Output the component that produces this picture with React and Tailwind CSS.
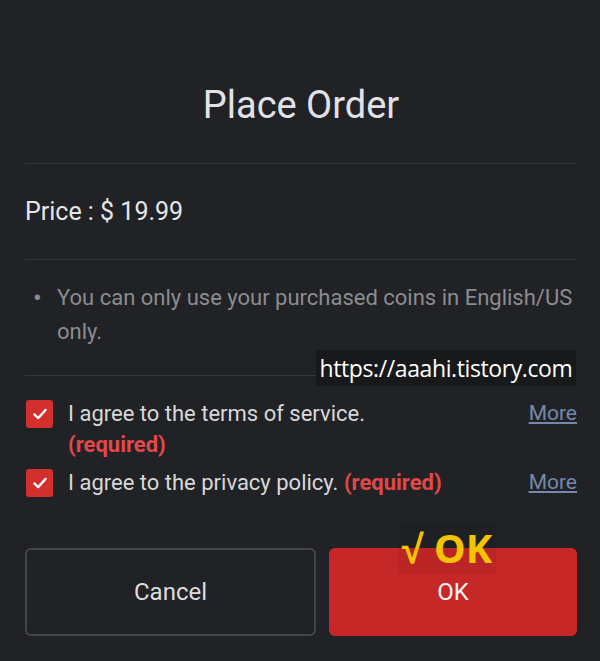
import React from "react";

const Check = () => (
  <svg viewBox="0 0 24 24" className="w-[18px] h-[18px]" fill="none">
    <path
      d="M4.5 12.5l5 5 10-11"
      stroke="#ffffff"
      strokeWidth="3"
      strokeLinecap="round"
      strokeLinejoin="round"
    />
  </svg>
);

const Box = () => (
  <div className="w-[27px] h-[28px] shrink-0 rounded-[3px] bg-[#d32f2f] flex items-center justify-center mt-[2px] ml-[1px]">
    <Check />
  </div>
);

export default function App() {
  return (
    <div className="relative w-[600px] h-[661px] bg-[#212225] font-['Roboto',sans-serif] pl-[25px] pr-[23px] overflow-hidden">
      <h1 className="pt-[83px] text-center text-[38px] leading-[44px] text-[#e2e2e6] font-normal">
        Place Order
      </h1>
      <div className="mt-[36px] h-px bg-[#38393c]" />
      <div className="pt-[33px] pb-[32px] text-[25px] leading-[30px] text-[#e6e6e8]">
        Price : $ 19.99
      </div>
      <div className="h-px bg-[#38393c]" />
      <div className="pt-[21px] pb-[26px] flex text-[22px] leading-[34px] text-[#8b8c8f]">
        <span className="w-[32px] shrink-0 pl-[8px] text-[26px]">•</span>
        <p>You can only use your purchased coins in English/US only.</p>
      </div>
      <div className="h-px bg-[#38393c]" />

      <div className="pt-[22px] flex flex-col gap-[7px] text-[22px] leading-[31px] text-[#d8d8da]">
        <div className="flex items-start">
          <Box />
          <div className="ml-[15px] flex-1">
            I agree to the terms of service.
            <br />
            <span className="font-bold text-[#e24848]">(required)</span>
          </div>
          <a className="text-[21px] text-[#7489ab] underline underline-offset-2">More</a>
        </div>
        <div className="flex items-start">
          <Box />
          <div className="ml-[15px] flex-1">
            I agree to the privacy policy.{" "}
            <span className="font-bold text-[#e24848]">(required)</span>
          </div>
          <a className="text-[21px] text-[#7489ab] underline underline-offset-2">More</a>
        </div>
      </div>

      <div className="mt-[50px] flex gap-[13px]">
        <button className="w-[291px] h-[88px] rounded-[6px] border-2 border-[#444548] text-[24px] text-[#dcdcde]">
          Cancel
        </button>
        <button className="w-[248px] h-[88px] rounded-[6px] bg-[#c62828] text-[24px] text-[#f2f2f2]">
          OK
        </button>
      </div>

      <div className="absolute left-[316px] top-[350px] w-[260px] h-[36px] bg-[#18191b] flex items-center justify-center text-[23px] text-white font-['Open_Sans',sans-serif] tracking-[-0.4px]">
        https://aaahi.tistory.com
      </div>

      <div className="absolute left-[398px] top-[525px] w-[98px] h-[48px] bg-black/5 flex items-start justify-center text-[40px] leading-[46px] font-bold text-[#f5c400] font-['Noto_Sans',sans-serif]">
        √ OK
      </div>
    </div>
  );
}
